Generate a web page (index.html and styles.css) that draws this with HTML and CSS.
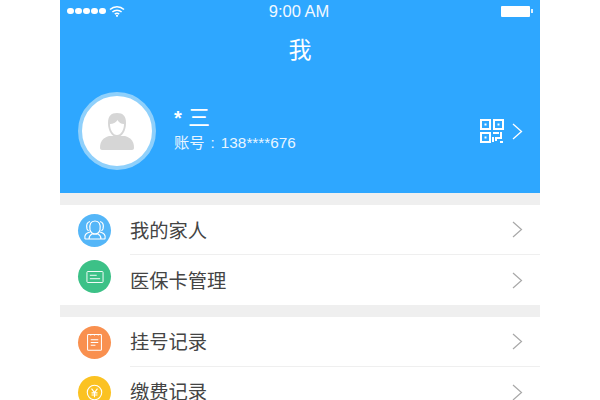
FILE: index.html
```html
<!DOCTYPE html>
<html lang="zh-CN">
<head>
    <meta charset="UTF-8">
    <title>我</title>
    <link rel="stylesheet" href="styles.css">
</head>
<body>
    <div class="phone">
        <div class="header">
            <div class="status-bar">
                <div class="status-left">
                    <span class="dot"></span><span class="dot"></span><span class="dot"></span><span class="dot"></span><span class="dot"></span>
                    <svg class="wifi" width="16" height="12" viewBox="0 0 16 12" fill="none" stroke="#fff" stroke-width="1.6">
                        <path d="M1 4.500C5 .8 11 .8 15 4.500"/>
                        <path d="M3.400 7C6 4.700 10 4.700 12.600 7"/>
                        <path d="M5.800 9.200C7 8.200 9 8.200 10.200 9.200"/>
                        <circle cx="8" cy="10.800" r="1.100" fill="#fff" stroke="none"/>
                    </svg>
                </div>
                <div class="status-time">9:00 AM</div>
                <div class="status-right">
                    <span class="battery"></span><span class="battery-tip"></span>
                </div>
            </div>
            <div class="title">我</div>
            <div class="profile">
                <div class="avatar">
                    <svg width="36" height="38" viewBox="0 0 36 38">
                        <path d="M1 36c0-7 3-10 9-12h16c6 2 9 5 9 12 0 1-1 2-2 2H3c-1 0-2-1-2-2z" fill="#d6d6d6"/>
                        <path d="M9 11C9 4 12 1 18 1s9 3 9 10c0 8-4 14-9 14S9 19 9 11z" fill="#d6d6d6"/>
                        <path d="M11 12c3 0 6-1.500 7.500-4 1.500 2.500 3.500 4 6.500 4 0 6-3 11-7 11s-7-5-7-11z" fill="#fff"/>
                    </svg>
                </div>
                <div class="user">
                    <div class="user-name"><span class="star">*</span> 三</div>
                    <div class="user-account">账号<span class="colon">:</span>138****676</div>
                </div>
                <svg class="qr" width="24" height="24" viewBox="0 0 24 24" fill="none" stroke="#fff" stroke-width="2">
                    <rect x="1" y="1" width="9" height="9"/>
                    <rect x="14" y="1" width="9" height="9"/>
                    <rect x="1" y="14" width="9" height="9"/>
                    <rect x="4.500" y="4.500" width="2" height="2" fill="#fff" stroke="none"/>
                    <rect x="17.500" y="4.500" width="2" height="2" fill="#fff" stroke="none"/>
                    <rect x="4.500" y="17.500" width="2" height="2" fill="#fff" stroke="none"/>
                    <path d="M13 14h6M21 13v6h-5v3M13 18v5M20 23h3"/>
                </svg>
                <svg class="arrow" width="11" height="17" viewBox="0 0 11 17" fill="none" stroke="#fff" stroke-width="1.300">
                    <path d="M1 1l8.500 7.500L1 16"/>
                </svg>
            </div>
        </div>

        <div class="gap"></div>

        <div class="row">
            <span class="icon icon-blue">
                <svg width="24" height="22" viewBox="0 0 24 22" fill="none" stroke="#fff" stroke-width="1.200">
                    <path d="M7 11C6 5 8 2 12 2s6 3 5 9c-1 3-3 4-5 4s-4-1-5-4z"/>
                    <path d="M7 2.500C4 3 3 6 4 10l1.500 2M17 2.500c3 .5 4 3.500 3 7.500l-1.500 2"/>
                    <path d="M2 20c-1-4 1-6 5-7M22 20c1-4-1-6-5-7M6 20c0-3 1-4 3-5h6c2 1 3 2 3 5zM2 20h20"/>
                </svg>
            </span>
            <div class="row-body">
                <span class="row-label">我的家人</span>
                <svg class="chevron" width="11" height="17" viewBox="0 0 11 17" fill="none" stroke="#a8a8a8" stroke-width="1.200"><path d="M1 1l8.500 7.500L1 16"/></svg>
            </div>
        </div>
        <div class="row">
            <span class="icon icon-green">
                <svg width="18" height="12" viewBox="0 0 20 14" fill="none" stroke="#fff" stroke-width="1.100">
                    <rect x=".6" y=".6" width="18.800" height="12.800" rx="1"/>
                    <path d="M4 5h8M4 9h12"/>
                </svg>
            </span>
            <div class="row-body no-line">
                <span class="row-label">医保卡管理</span>
                <svg class="chevron" width="11" height="17" viewBox="0 0 11 17" fill="none" stroke="#a8a8a8" stroke-width="1.200"><path d="M1 1l8.500 7.500L1 16"/></svg>
            </div>
        </div>

        <div class="gap"></div>

        <div class="row lower">
            <span class="icon icon-orange">
                <svg width="15" height="18" viewBox="0 0 16 19" fill="none" stroke="#fff" stroke-width="1.100">
                    <rect x=".6" y="1.600" width="14.800" height="16.800" rx="1"/>
                    <path d="M4 1v1.500M8 1v1.500M12 1v1.500M4 7h8M4 10h8M4 13h5"/>
                </svg>
            </span>
            <div class="row-body">
                <span class="row-label">挂号记录</span>
                <svg class="chevron" width="11" height="17" viewBox="0 0 11 17" fill="none" stroke="#a8a8a8" stroke-width="1.200"><path d="M1 1l8.500 7.500L1 16"/></svg>
            </div>
        </div>
        <div class="row lower">
            <span class="icon icon-yellow">
                <svg width="17" height="17" viewBox="0 0 20 20" fill="none" stroke="#fff" stroke-width="1.300">
                    <circle cx="10" cy="10" r="8.500"/>
                    <path d="M6.500 5.500L10 10l3.500-4.500M6.500 10.500h7M6.500 13h7M10 10v5.500"/>
                </svg>
            </span>
            <div class="row-body no-line">
                <span class="row-label">缴费记录</span>
                <svg class="chevron" width="11" height="17" viewBox="0 0 11 17" fill="none" stroke="#a8a8a8" stroke-width="1.200"><path d="M1 1l8.500 7.500L1 16"/></svg>
            </div>
        </div>
    </div>
</body>
</html>
```

FILE: styles.css
```css
html, body {
    height: 100%;
    overflow: hidden;
}
body {
    margin: 0;
    background: #fff;
    font-family: "Liberation Sans", "Noto Sans CJK SC", sans-serif;
}
.phone {
    width: 480px;
    margin: 0 auto;
    background: #fff;
}
.header {
    height: 193px;
    background: #2ea7ff;
    color: #fff;
    overflow: hidden;
}
.status-bar {
    display: flex;
    align-items: center;
    justify-content: space-between;
    height: 22px;
    padding: 0 7px;
}
.status-left {
    flex: 1;
    display: flex;
    align-items: center;
    gap: 1.500px;
}
.dot {
    width: 6.500px;
    height: 6.500px;
    border-radius: 50%;
    background: #fff;
}
.wifi {
    margin-left: 2px;
}
.status-time {
    padding-right: 2px;
    font-size: 16.500px;
    color: #f2f9ff;
}
.status-right {
    flex: 1;
    display: flex;
    align-items: center;
    justify-content: flex-end;
}
.battery {
    width: 29px;
    height: 11px;
    background: #fff;
    border-radius: 1px;
}
.battery-tip {
    width: 2px;
    height: 4px;
    margin-left: 1px;
    background: #dff1ff;
}
.title {
    margin-top: 15px;
    font-size: 23px;
    line-height: 26px;
    text-align: center;
}
.profile {
    display: flex;
    align-items: center;
    margin-top: 29px;
    padding: 0 17px 0 18px;
}
.avatar {
    display: flex;
    align-items: center;
    justify-content: center;
    box-sizing: border-box;
    width: 78px;
    height: 78px;
    border: 4px solid #8fd0fb;
    border-radius: 50%;
    background: #fff;
}
.user {
    flex: 1;
    margin-left: 18px;
    padding-bottom: 5px;
}
.user-name {
    font-size: 22px;
    line-height: 26px;
}
.star {
    font-size: 20px;
    font-weight: bold;
}
.user-account {
    margin-top: 2px;
    font-size: 15.300px;
    line-height: 20px;
    color: #e8f5ff;
}
.colon {
    margin: 0 6px;
}
.arrow {
    margin-left: 8px;
}
.gap {
    height: 12px;
    background: #efefef;
}
.row {
    display: flex;
    align-items: center;
    height: 50px;
    padding-left: 18px;
}
.icon {
    display: flex;
    align-items: center;
    justify-content: center;
    flex-shrink: 0;
    width: 33px;
    height: 33px;
    border-radius: 50%;
}
.icon-blue {
    background: #54b6f8;
}
.icon-green {
    margin-bottom: 7px;
    background: #3cc187;
}
.icon-orange {
    background: #f9904f;
}
.icon-yellow {
    background: #fbc222;
}
.row-body {
    flex: 1;
    display: flex;
    align-items: center;
    justify-content: space-between;
    box-sizing: border-box;
    height: 50px;
    margin-left: 19px;
    padding-right: 17px;
    border-bottom: 1px solid #efefef;
}
.row-body.no-line {
    border-bottom: none;
}
.row-label {
    font-size: 19.300px;
    color: #444;
}
.lower .row-label {
    padding-bottom: 2px;
}
```
